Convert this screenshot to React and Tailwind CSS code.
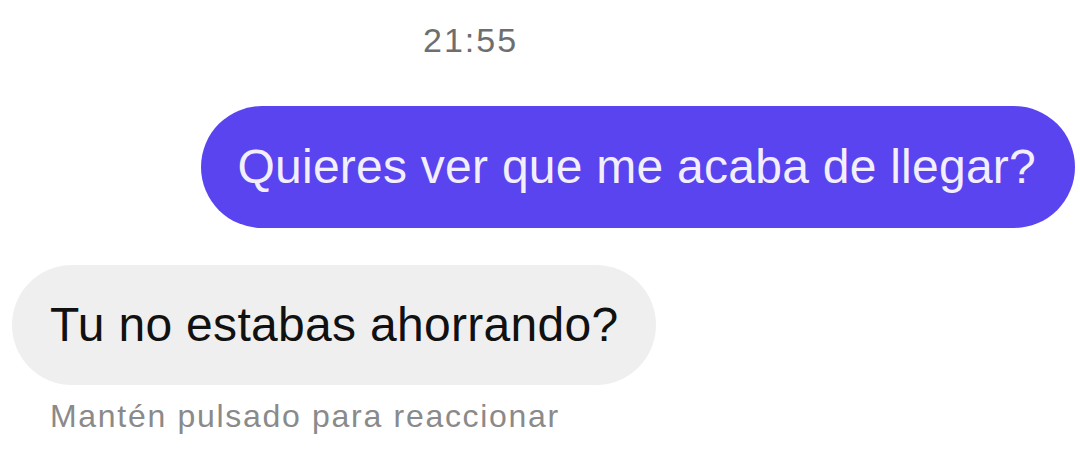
export default function App() {
  return (
    <div
      className="w-[1080px] h-[464px] bg-white overflow-hidden flex flex-col"
      style={{ fontFamily: '"Liberation Sans", Arial, sans-serif' }}
    >
      <div className="pt-[20px] h-[106px] pl-[423px]">
        <span className="text-[34px] leading-[40px] tracking-[2px] text-[#6e6e6e]">21:55</span>
      </div>
      <div className="flex justify-end pr-[5px]">
        <div className="h-[122px] rounded-full bg-[#5a44ef] pl-[36px] pr-[39px] flex items-center">
          <span className="text-[48px] tracking-[0.25px] text-[#f3eefc] leading-none">Quieres ver que me acaba de llegar?</span>
        </div>
      </div>
      <div className="flex pl-[12px] mt-[37px]">
        <div className="h-[120px] rounded-full bg-[#efefef] pl-[38px] pr-[38px] flex items-center">
          <span className="text-[48px] tracking-[0.3px] text-[#111] leading-none">Tu no estabas ahorrando?</span>
        </div>
      </div>
      <div className="pl-[50px] mt-[12px]">
        <span className="text-[32px] tracking-[1.7px] text-[#8a8a8a] leading-[38px]">Mantén pulsado para reaccionar</span>
      </div>
    </div>
  );
}
